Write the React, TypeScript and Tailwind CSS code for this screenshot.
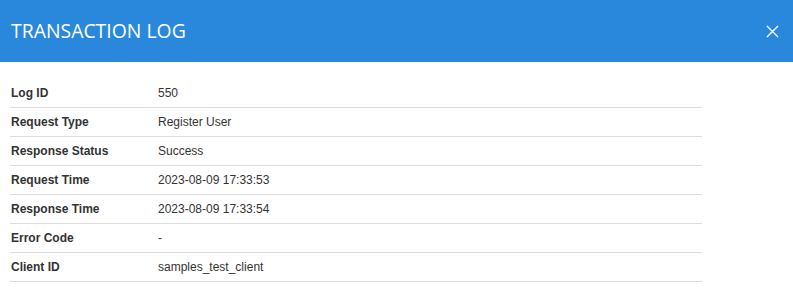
const rows: [string, string][] = [
  ["Log ID", "550"],
  ["Request Type", "Register User"],
  ["Response Status", "Success"],
  ["Request Time", "2023-08-09 17:33:53"],
  ["Response Time", "2023-08-09 17:33:54"],
  ["Error Code", "-"],
  ["Client ID", "samples_test_client"],
];

export default function App() {
  return (
    <div className="h-[288px] w-[793px] bg-white">
      <div className="flex h-[62px] items-center justify-between bg-[#2a88dc] pl-[11px] pr-[14px]">
        <h2 className="font-['Open_Sans',sans-serif] text-[19.4px] font-normal text-white">
          TRANSACTION LOG
        </h2>
        <svg width="13" height="13" viewBox="0 0 13 13" className="mt-[1px]">
          <path d="M1 1L12 12M12 1L1 12" stroke="white" strokeWidth="1.4" />
        </svg>
      </div>
      <div className="ml-[10px] mt-[17px] w-[692px] font-['Liberation_Sans',Arial,sans-serif] text-[12px] text-[#333]">
        {rows.map(([label, value]) => (
          <div key={label} className="flex h-[29px] items-center border-b border-[#dddddd]">
            <div className="w-[148px] pl-[1px] font-bold">{label}</div>
            <div>{value}</div>
          </div>
        ))}
      </div>
    </div>
  );
}
